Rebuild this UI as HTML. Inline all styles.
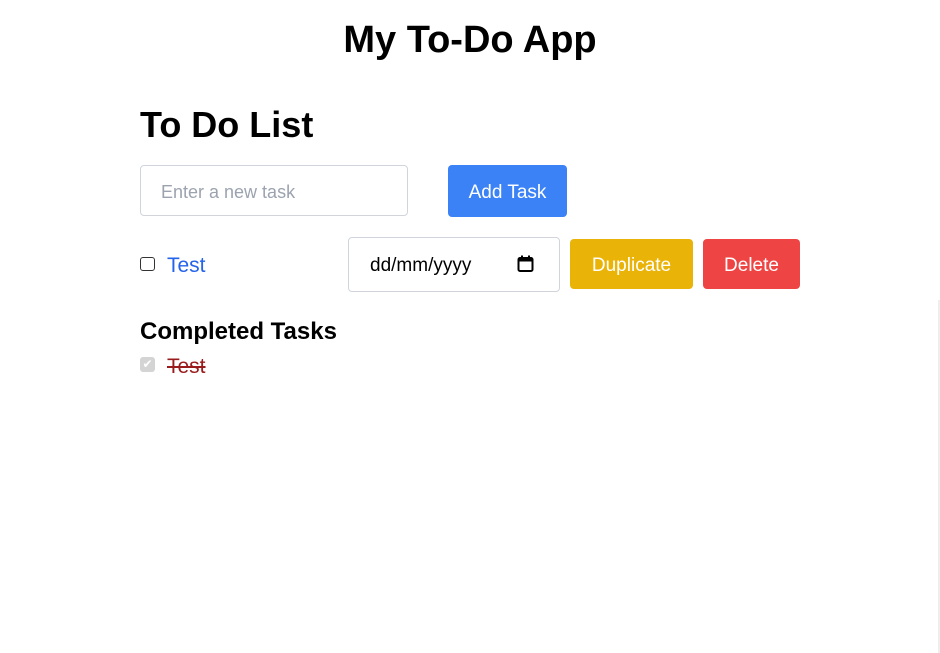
<!DOCTYPE html>
<html><head><style>
*{box-sizing:border-box;margin:0;padding:0}
body{width:940px;height:653px;background:#fff;font-family:"Liberation Sans",sans-serif;position:relative;overflow:hidden}
.a{position:absolute;white-space:nowrap}
h1{position:absolute;left:0;width:940px;text-align:center;top:18px;font-size:38px;font-weight:bold;line-height:44px}
.btn{position:absolute;color:#fff;border-radius:4px;font-size:19px;display:flex;align-items:center;justify-content:center;padding-top:4px}
</style></head><body>
<h1>My To-Do App</h1>
<div class="a" style="left:140px;top:103px;font-size:36px;font-weight:bold;line-height:44px">To Do List</div>
<div class="a" style="left:140px;top:165px;width:268px;height:51px;border:1px solid #d1d5db;border-radius:4px;padding:2px 20px 0;line-height:49px;font-size:18px;color:#9ca3af">Enter a new task</div>
<div class="btn" style="left:448px;top:165px;width:119px;height:52px;background:#3b82f6">Add Task</div>
<div class="a" style="left:140px;top:257px;width:15px;height:14px;border:1.5px solid #333;border-radius:3px"></div>
<div class="a" style="left:167px;top:253px;font-size:21px;color:#2563eb;line-height:26px">Test</div>
<div class="a" style="left:348px;top:237px;width:212px;height:55px;border:1px solid #d1d5db;border-radius:4px"></div>
<div class="a" style="left:370px;top:254px;font-size:19px;line-height:24px">dd/mm/yyyy</div>
<svg class="a" style="left:516px;top:254px" width="20" height="20" viewBox="0 0 20 20"><rect x="2.5" y="4" width="14" height="13" rx="1.5" fill="none" stroke="#000" stroke-width="2"/><rect x="2.5" y="4" width="14" height="3.5" fill="#000"/><rect x="5" y="1.5" width="2" height="3" fill="#000"/><rect x="12" y="1.5" width="2" height="3" fill="#000"/></svg>
<div class="btn" style="left:570px;top:239px;width:123px;height:50px;background:#eab308">Duplicate</div>
<div class="btn" style="left:703px;top:239px;width:97px;height:50px;background:#ef4444">Delete</div>
<div class="a" style="left:140px;top:317px;font-size:24px;font-weight:bold;line-height:30px">Completed Tasks</div>
<div class="a" style="left:140px;top:357px;width:15px;height:15px;background:#d4d4d4;border-radius:3px;color:#fff;font-size:12px;line-height:15px;text-align:center">✔</div>
<div class="a" style="left:167px;top:354px;font-size:21px;color:#991b1b;line-height:26px;text-decoration:line-through">Test</div>
<div class="a" style="left:938px;top:300px;width:2px;height:353px;background:#eee"></div>
</body></html>
